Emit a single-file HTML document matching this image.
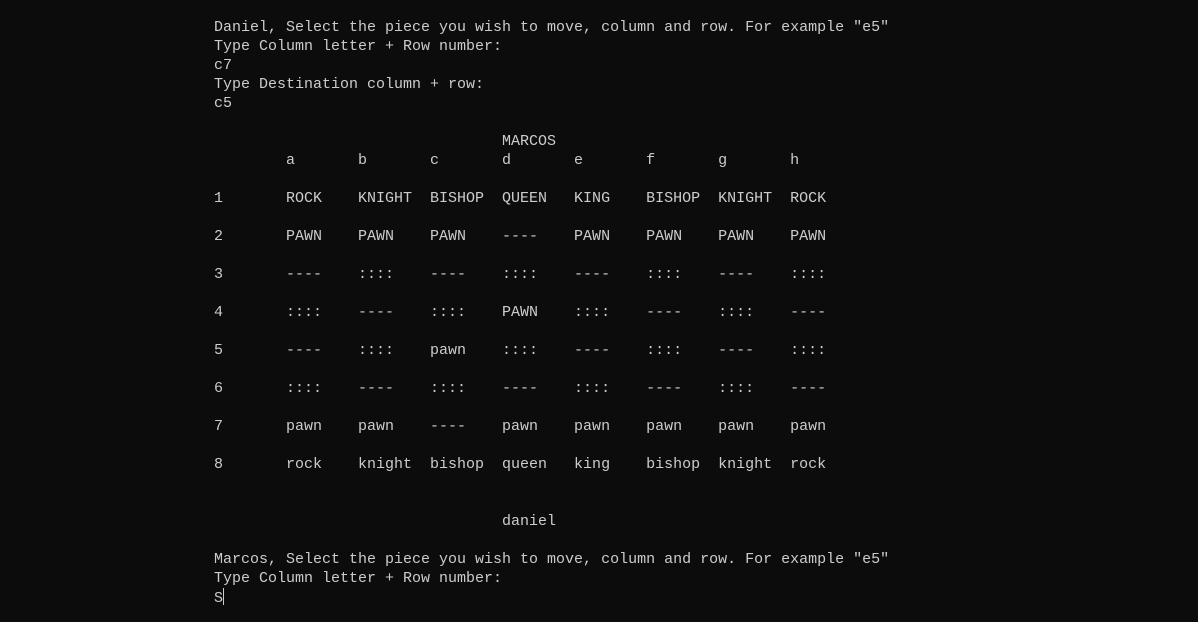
<!DOCTYPE html>
<html><head><meta charset="utf-8"><style>
html,body{margin:0;padding:0;background:#0c0c0c;width:1198px;height:622px;overflow:hidden}
pre{position:absolute;left:214px;top:18px;margin:0;font-family:"Liberation Mono",monospace;font-size:15px;line-height:19px;color:#cccccc;white-space:pre}
.cur{display:inline-block;width:1px;height:17px;background:#cccccc;vertical-align:-3px}
</style></head><body><pre>Daniel, Select the piece you wish to move, column and row. For example "e5"
Type Column letter + Row number:
c7
Type Destination column + row:
c5

                                MARCOS
        a       b       c       d       e       f       g       h

1       ROCK    KNIGHT  BISHOP  QUEEN   KING    BISHOP  KNIGHT  ROCK

2       PAWN    PAWN    PAWN    ----    PAWN    PAWN    PAWN    PAWN

3       ----    ::::    ----    ::::    ----    ::::    ----    ::::

4       ::::    ----    ::::    PAWN    ::::    ----    ::::    ----

5       ----    ::::    pawn    ::::    ----    ::::    ----    ::::

6       ::::    ----    ::::    ----    ::::    ----    ::::    ----

7       pawn    pawn    ----    pawn    pawn    pawn    pawn    pawn

8       rock    knight  bishop  queen   king    bishop  knight  rock


                                daniel

Marcos, Select the piece you wish to move, column and row. For example "e5"
Type Column letter + Row number:
S<span class="cur"></span></pre></body></html>
